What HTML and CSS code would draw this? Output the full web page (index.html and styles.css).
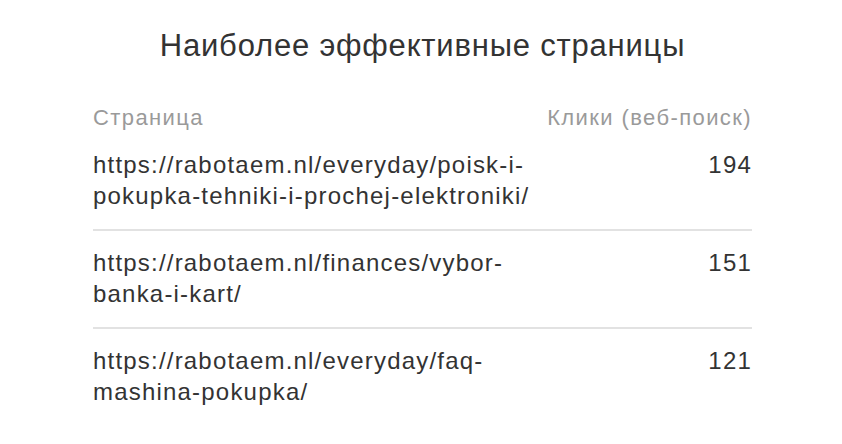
FILE: index.html
```html
<!DOCTYPE html>
<html lang="ru">
<head>
<meta charset="utf-8">
<link rel="stylesheet" href="styles.css">
</head>
<body>
<div class="card">
  <h1 class="title">Наиболее эффективные страницы</h1>
  <table class="tbl">
    <thead>
      <tr><th class="c-page">Страница</th><th class="c-num">Клики (веб-поиск)</th></tr>
    </thead>
    <tbody>
      <tr><td class="c-page">https://rabotaem.nl/everyday/poisk-i-<br>pokupka-tehniki-i-prochej-elektroniki/</td><td class="c-num">194</td></tr>
      <tr><td class="c-page">https://rabotaem.nl/finances/vybor-<br>banka-i-kart/</td><td class="c-num">151</td></tr>
      <tr><td class="c-page">https://rabotaem.nl/everyday/faq-<br>mashina-pokupka/</td><td class="c-num">121</td></tr>
    </tbody>
  </table>
</div>
</body>
</html>
```
FILE: styles.css
```css
html, body { margin: 0; padding: 0; background: #fff; }
body { font-family: "Liberation Sans", Arial, sans-serif; color: #333; }
.card { padding: 26px 90px 0 93px; }
.title { margin: 0 0 36px; text-align: center; font-weight: normal; font-size: 31px; line-height: 40px; letter-spacing: 0.8px; color: #333; }
.tbl { width: 659px; border-collapse: collapse; }
.tbl th { font-weight: normal; font-size: 22px; line-height: 31px; letter-spacing: 1.4px; color: #9a9a9a; padding: 0 0 16px; }
.tbl td { font-size: 24px; line-height: 31px; letter-spacing: 1.2px; padding: 0 0 18px; vertical-align: top; }
.tbl tbody tr + tr td { border-top: 2px solid #e2e2e2; padding-top: 16px; }
.c-page { text-align: left; }
.c-num { text-align: right; }
.tbl .c-num { padding-right: 0; margin-right: -1px; }
```
